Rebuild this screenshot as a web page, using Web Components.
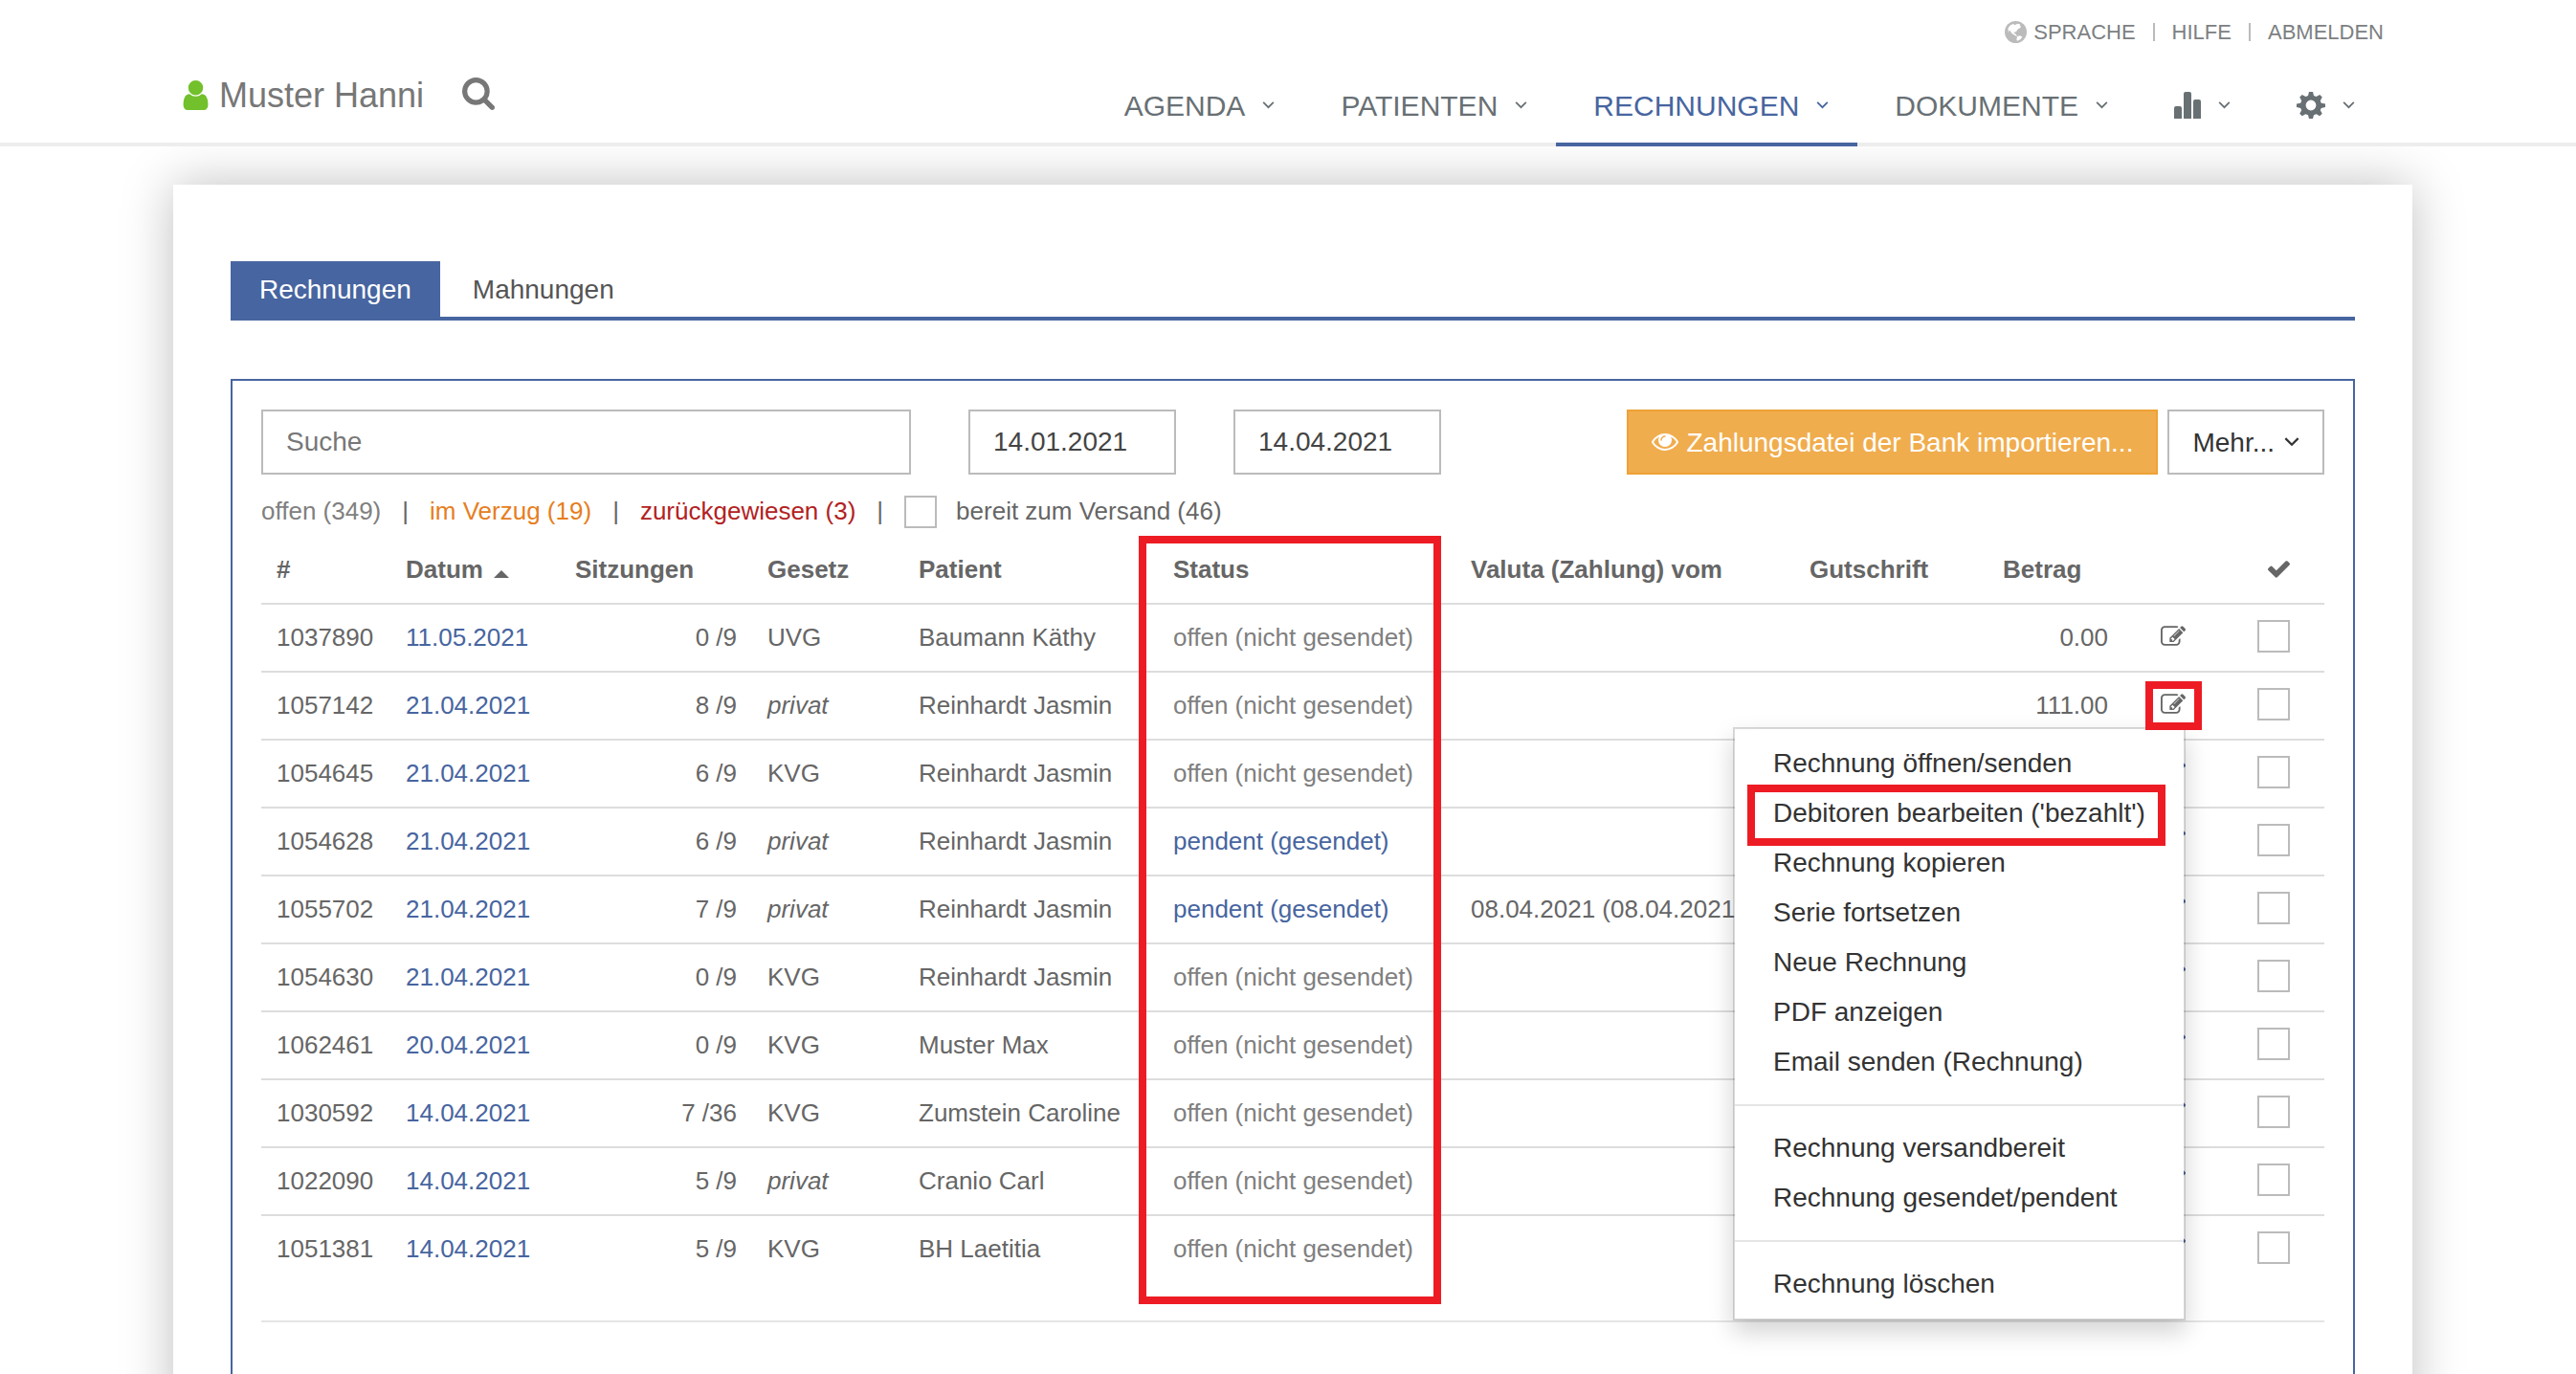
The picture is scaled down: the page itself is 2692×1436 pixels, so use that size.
<!DOCTYPE html>
<html lang="de">
<head>
<meta charset="utf-8">
<title>Rechnungen</title>
<style>
    html{
        --blue: #4765a0;
        --mark: #ed1c24;
        --line: #ddd;
        --field: #bbb;
        overflow-x: hidden;
    }
    body{
        margin: 0;
        min-height: 100vh;
        display: flex;
        flex-direction: column;
        overflow: clip;
        background: #fff;
        color: #666;
        font-family: "Liberation Sans", Arial, sans-serif;
        font-size: 26px;
        line-height: 37px;
    }
    invoice-card{
        flex: 1;
    }
</style>
</head>
<body>
    <site-header user="Muster Hanni"></site-header>
    <invoice-card>
        <tab-bar></tab-bar>
        <invoice-panel>
            <invoice-toolbar></invoice-toolbar>
            <invoice-filter></invoice-filter>
            <invoice-table></invoice-table>
        </invoice-panel>
    </invoice-card>

<script>
const icons = {
    user: ['256 128 1280 1536', '<path d="M1536 1399q0 109-62.5 187t-150.5 78h-854q-88 0-150.5-78t-62.5-187q0-85 8.5-160.5t31.5-152 58.5-131 94-89 134.5-34.5q131 128 313 128t313-128q76 0 134.5 34.5t94 89 58.5 131 31.5 152 8.5 160.5zm-256-887q0 159-112.5 271.5t-271.5 112.5-271.5-112.5-112.5-271.5 112.5-271.5 271.5-112.5 271.5 112.5 112.5 271.5z"/>'],
    search: ['64 128 1664 1664', '<path d="M1216 832q0-185-131.5-316.5t-316.5-131.5-316.5 131.5-131.5 316.5 131.5 316.5 316.5 131.5 316.5-131.5 131.5-316.5zm512 832q0 52-38 90t-90 38q-54 0-90-38l-343-342q-179 124-399 124-143 0-273.5-55.5t-225-150-150-225-55.5-273.5 55.5-273.5 150-225 225-150 273.5-55.5 273.5 55.5 225 150 150 225 55.5 273.5q0 220-124 399l343 343q37 37 37 90z"/>'],
    edit: ['0 128 1784 1408', '<path d="M888 1184l116-116-152-152-116 116v56h96v96h56zm440-720q-16-16-33 1l-350 350q-17 17-1 33t33-1l350-350q17-17 1-33zm80 594v190q0 119-84.5 203.5t-203.5 84.5h-832q-119 0-203.5-84.5t-84.5-203.5v-832q0-119 84.5-203.5t203.5-84.5h832q63 0 117 25 15 7 18 23 3 17-9 29l-49 49q-14 14-32 8-23-6-45-6h-832q-66 0-113 47t-47 113v832q0 66 47 113t113 47h832q66 0 113-47t47-113v-126q0-13 9-22l64-64q15-15 35-7t20 29zm-96-738l288 288-672 672h-288v-288zm444 132l-92 92-288-288 92-92q28-28 68-28t68 28l152 152q28 28 28 68t-28 68z"/>'],
    check: ['121 338 1550 1184', '<path d="M1671 566q0 40-28 68l-724 724-136 136q-28 28-68 28t-68-28l-136-136-362-362q-28-28-28-68t28-68l136-136q28-28 68-28t68 28l294 295 656-657q28-28 68-28t68 28l136 136q28 28 28 68z"/>'],
    eye: ['0 384 1792 1152', '<path d="M1664 960q-152-236-381-353 61 104 61 225 0 185-131.5 316.5t-316.5 131.5-316.5-131.5-131.5-316.5q0-121 61-225-229 117-381 353 133 205 333.5 326.5t434.5 121.5 434.5-121.5 333.5-326.5zm-720-384q0-20-14-34t-34-14q-125 0-214.5 89.5t-89.5 214.5q0 20 14 34t34 14 34-14 14-34q0-86 61-147t147-61q20 0 34-14t14-34zm848 384q0 34-20 69-140 230-376.5 368.5t-499.5 138.5-499.5-139-376.5-368q-20-35-20-69t20-69q140-229 376.5-368t499.5-139 499.5 139 376.5 368q20 35 20 69z"/>'],
    globe: ['0 0 23 23', '<circle cx="11.500" cy="11.500" r="11.500"/><path fill="#fff" d="M3.500 7.500L6 4.200 9 3l1.500 1.200 2.800-1.400 3 .8-.6 1.600 1.500.3-1 1.800-2.200 1-1.600 2.200-1.400 1.200-1.500-.4.3 1.300 1.500.8 1.500 2-.4.600-3-1.800-2.300-1.600-1.700-2.800-.8.200-.8 2.200zM13 16l3-.8 2.400 1.200-1.800 2.600-3.400 1.800-.8-1z"/>'],
    stats: ['0 0 28 28', '<path d="M0 28V17q0-2 2-2h4q2 0 2 2v11zM10 28V2q0-2 2-2h4q2 0 2 2v26zM20 28V10q0-2 2-2h4q2 0 2 2v18z"/>'],
    gear: ['0 0 30 28', '<path fill-rule="evenodd" d="M13 0h4l1 4 2.500 1 3.700-2 2.600 2.600-2 3.700 1 2.500L30 12.500v3.500l-4.200 1-1 2.300 2 3.400-2.600 2.600-3.600-2-2.600 1-1 3.700h-4l-1-3.700-2.600-1-3.600 2-2.600-2.600 2-3.400-1-2.300L0 16v-3.500l4.200-.7 1-2.500-2-3.700L5.800 3l3.700 2L12 4zM15 8.600a5.400 5.400 0 1 0 0 10.800a5.400 5.400 0 1 0 0-10.800z"/>'],
    chevron: ['0 0 14 9', '<path fill="none" stroke="currentColor" stroke-width="2" d="M1 1l6 6 6-6"/>'],
    caret: ['0 0 16 8', '<path d="M0 8l8-8 8 8z"/>']
};

class FaIcon extends HTMLElement{
    constructor(){
        super();
        this.shadow = this.attachShadow({mode: 'open'});
    }

    connectedCallback(){
        const [box, shape] = icons[this.getAttribute('name')];
        this.shadow.innerHTML =
        `
        <style>
            :host{
                display: inline-block;
                flex: none;
                line-height: 0;
            }
            svg{
                display: block;
                fill: currentColor;
            }
        </style>
        <svg aria-hidden="true" viewBox="${box}" width="${this.getAttribute('w')}" height="${this.getAttribute('h')}">${shape}</svg>`;
    }
}
customElements.define('fa-icon', FaIcon);

class NavItem extends HTMLElement{
    constructor(){
        super();
        this.shadow = this.attachShadow({mode: 'open'});
    }

    connectedCallback(){
        this.shadow.innerHTML =
        `
        <style>
            :host{
                display: block;
                color: #687074;
            }
            :host([active]){
                color: var(--blue);
            }
            a{
                display: flex;
                align-items: center;
                gap: 18px;
                height: 78px;
                padding: 2px 30px 0 39px;
                border-bottom: 4px solid transparent;
                color: inherit;
                font-size: 30px;
                text-decoration: none;
            }
            :host([active]) a{
                border-color: var(--blue);
            }
        </style>
        <a href="#"><slot></slot><fa-icon name="chevron" w="13" h="8"></fa-icon></a>`;
    }
}
customElements.define('nav-item', NavItem);

class SiteHeader extends HTMLElement{
    constructor(){
        super();
        this.shadow = this.attachShadow({mode: 'open'});
    }

    connectedCallback(){
        this.shadow.innerHTML =
        `
        <style>
            :host{
                display: block;
                position: relative;
                z-index: 1;
                background: #fff;
                border-bottom: 4px solid #ededed;
            }
            header{
                display: flex;
                justify-content: space-between;
                align-items: flex-end;
                height: 149px;
                padding: 0 201px 0 190px;
            }
            .user{
                display: flex;
                align-items: center;
                height: 100px;
                color: #777;
                font-size: 36px;
            }
            .user a{
                display: flex;
                align-items: center;
                gap: 10px;
                color: inherit;
                text-decoration: none;
            }
            .user a fa-icon{
                color: #72c02c;
            }
            button{
                margin-left: 40px;
                padding: 0;
                border: 0;
                background: none;
                color: inherit;
            }
            .right{
                display: flex;
                flex-direction: column;
                align-items: flex-end;
                justify-content: space-between;
                height: 100%;
            }
            .links{
                display: flex;
                align-items: center;
                gap: 18px;
                height: 66px;
                font-size: 22px;
            }
            .links a{
                display: flex;
                align-items: center;
                gap: 7px;
                color: #7c8082;
                text-decoration: none;
            }
            .links fa-icon{
                color: #bbb;
            }
            .links i{
                width: 2px;
                height: 19px;
                background: #bbb;
            }
            nav{
                display: flex;
                margin-bottom: -4px;
            }
        </style>
        <header>
            <div class="user">
                <a href="#"><fa-icon name="user" w="29" h="31"></fa-icon>${this.getAttribute('user')}</a>
                <button type="button" aria-label="Suchen"><fa-icon name="search" w="34" h="34"></fa-icon></button>
            </div>
            <div class="right">
                <div class="links">
                    <a href="#"><fa-icon name="globe" w="23" h="23"></fa-icon>SPRACHE</a><i></i>
                    <a href="#">HILFE</a><i></i>
                    <a href="#">ABMELDEN</a>
                </div>
                <nav>
                    <nav-item>AGENDA</nav-item>
                    <nav-item>PATIENTEN</nav-item>
                    <nav-item active>RECHNUNGEN</nav-item>
                    <nav-item>DOKUMENTE</nav-item>
                    <nav-item><fa-icon name="stats" w="28" h="28"></fa-icon></nav-item>
                    <nav-item><fa-icon name="gear" w="30" h="28"></fa-icon></nav-item>
                </nav>
            </div>
        </header>`;
    }
}
customElements.define('site-header', SiteHeader);

class InvoiceCard extends HTMLElement{
    constructor(){
        super();
        this.shadow = this.attachShadow({mode: 'open'});
        // the card runs out below the page, so its lower shadow never shows
        this.shadow.innerHTML =
        `
        <style>
            :host{
                display: flex;
                flex-direction: column;
                margin: 40px 171px -60px 181px;
                padding: 80px 60px 0;
                background: #fff;
                box-shadow: 0 0 50px rgba(0, 0, 0, .25);
            }
            ::slotted(invoice-panel){
                flex: 1;
            }
        </style>
        <slot></slot>`;
    }
}
customElements.define('invoice-card', InvoiceCard);

class TabBar extends HTMLElement{
    constructor(){
        super();
        this.shadow = this.attachShadow({mode: 'open'});
    }

    connectedCallback(){
        this.shadow.innerHTML =
        `
        <style>
            :host{
                display: flex;
                gap: 4px;
                border-bottom: 4px solid var(--blue);
                font-size: 28px;
                line-height: 56px;
            }
            a{
                padding: 2px 30px 0;
                color: #555;
                text-decoration: none;
            }
            a.active{
                background: var(--blue);
                color: #fff;
            }
        </style>
        <a class="active" href="#">Rechnungen</a>
        <a href="#">Mahnungen</a>`;
    }
}
customElements.define('tab-bar', TabBar);

class InvoicePanel extends HTMLElement{
    constructor(){
        super();
        this.shadow = this.attachShadow({mode: 'open'});
        this.shadow.innerHTML =
        `
        <style>
            :host{
                display: block;
                margin-top: 61px;
                padding: 30px 30px 0;
                border: 2px solid var(--blue);
                border-bottom: 0;
            }
        </style>
        <slot></slot>`;
    }
}
customElements.define('invoice-panel', InvoicePanel);

class InvoiceToolbar extends HTMLElement{
    constructor(){
        super();
        this.shadow = this.attachShadow({mode: 'open'});
    }

    connectedCallback(){
        this.shadow.innerHTML =
        `
        <style>
            :host{
                display: grid;
                grid-template-columns: 679fr 217fr 217fr 863fr;
                gap: 60px;
            }
            input, button{
                box-sizing: border-box;
                height: 68px;
                margin: 0;
                padding: 0 24px;
                border: 2px solid var(--field);
                border-radius: 0;
                background: #fff;
                color: #444;
                font: inherit;
                font-size: 28px;
            }
            input{
                width: 100%;
                min-width: 0;
            }
            input::placeholder{
                color: #777;
                opacity: 1;
            }
            div{
                display: flex;
                justify-content: flex-end;
                gap: 10px;
            }
            button{
                display: flex;
                align-items: center;
                gap: 8px;
                color: #333;
                white-space: nowrap;
            }
            .import{
                border-color: #eea236;
                background: #f0ad4e;
                color: #fff;
            }
            .more{
                gap: 10px;
            }
        </style>
        <input type="text" placeholder="Suche" aria-label="Suche">
        <input type="text" value="14.01.2021" aria-label="Von">
        <input type="text" value="14.04.2021" aria-label="Bis">
        <div>
            <button type="button" class="import"><fa-icon name="eye" w="28" h="18"></fa-icon>Zahlungsdatei der Bank importieren...</button>
            <button type="button" class="more">Mehr...<fa-icon name="chevron" w="16" h="10"></fa-icon></button>
        </div>`;
    }
}
customElements.define('invoice-toolbar', InvoiceToolbar);

const checkboxStyle = `
            input[type=checkbox]{
                appearance: none;
                display: block;
                box-sizing: border-box;
                width: 34px;
                height: 34px;
                margin: 0;
                border: 2px solid var(--field);
                background: #fff;
            }`;

class InvoiceFilter extends HTMLElement{
    constructor(){
        super();
        this.shadow = this.attachShadow({mode: 'open'});
    }

    connectedCallback(){
        this.shadow.innerHTML =
        `
        <style>
            :host{
                display: flex;
                align-items: center;
                gap: 22px;
                margin: 20px 0 8px;
                white-space: nowrap;
            }
            a{
                color: #808080;
                text-decoration: none;
            }
            a.late{
                color: #e67e22;
            }
            a.rejected{
                color: #b22222;
            }
            label{
                display: flex;
                align-items: center;
                gap: 20px;
            }
            ${checkboxStyle}
        </style>
        <a href="#">offen (349)</a><span>|</span>
        <a class="late" href="#">im Verzug (19)</a><span>|</span>
        <a class="rejected" href="#">zurückgewiesen (3)</a><span>|</span>
        <label><input type="checkbox">bereit zum Versand (46)</label>`;
    }
}
customElements.define('invoice-filter', InvoiceFilter);

class ActionMenu extends HTMLElement{
    constructor(){
        super();
        this.shadow = this.attachShadow({mode: 'open'});
    }

    connectedCallback(){
        this.shadow.innerHTML =
        `
        <style>
            :host{
                display: block;
                box-sizing: border-box;
                width: 473px;
                padding: 10px 0;
                border: 2px solid rgba(0, 0, 0, .15);
                background: #fff;
                background-clip: padding-box;
                box-shadow: 0 12px 24px rgba(0, 0, 0, .175);
                text-align: left;
            }
            a{
                display: block;
                position: relative;
                padding: 6px 40px;
                color: #333;
                font-size: 28px;
                line-height: 40px;
                text-decoration: none;
                white-space: nowrap;
            }
            hr{
                height: 2px;
                margin: 18px 0;
                border: 0;
                background: #e5e5e5;
            }
            .marked::after{
                content: "";
                position: absolute;
                box-sizing: border-box;
                top: -4px;
                left: 13px;
                width: 437px;
                height: 64px;
                border: 8px solid var(--mark);
            }
        </style>
        <a href="#">Rechnung öffnen/senden</a>
        <a class="marked" href="#">Debitoren bearbeiten ('bezahlt')</a>
        <a href="#">Rechnung kopieren</a>
        <a href="#">Serie fortsetzen</a>
        <a href="#">Neue Rechnung</a>
        <a href="#">PDF anzeigen</a>
        <a href="#">Email senden (Rechnung)</a>
        <hr>
        <a href="#">Rechnung versandbereit</a>
        <a href="#">Rechnung gesendet/pendent</a>
        <hr>
        <a href="#">Rechnung löschen</a>`;
    }
}
customElements.define('action-menu', ActionMenu);

// Nr, Datum, Sitzungen, Gesetz, Patient, pendent, Valuta, Betrag
const invoices = [
    ['1037890', '11.05.2021', '0 /9', 'UVG', 'Baumann Käthy', false, '', '0.00'],
    ['1057142', '21.04.2021', '8 /9', 'privat', 'Reinhardt Jasmin', false, '', '111.00'],
    ['1054645', '21.04.2021', '6 /9', 'KVG', 'Reinhardt Jasmin', false, '', ''],
    ['1054628', '21.04.2021', '6 /9', 'privat', 'Reinhardt Jasmin', true, '', ''],
    ['1055702', '21.04.2021', '7 /9', 'privat', 'Reinhardt Jasmin', true, '08.04.2021 (08.04.2021', ''],
    ['1054630', '21.04.2021', '0 /9', 'KVG', 'Reinhardt Jasmin', false, '', ''],
    ['1062461', '20.04.2021', '0 /9', 'KVG', 'Muster Max', false, '', ''],
    ['1030592', '14.04.2021', '7 /36', 'KVG', 'Zumstein Caroline', false, '', ''],
    ['1022090', '14.04.2021', '5 /9', 'privat', 'Cranio Carl', false, '', ''],
    ['1051381', '14.04.2021', '5 /9', 'KVG', 'BH Laetitia', false, '', '']
];
const openRow = 1;
const columns = [135, 177, 201, 158, 266, 311, 354, 202, 142, 104, 106];

class InvoiceTable extends HTMLElement{
    constructor(){
        super();
        this.shadow = this.attachShadow({mode: 'open'});
    }

    connectedCallback(){
        this.render();
    }

    row([nr, date, sessions, law, patient, pending, paid, amount], index){
        const open = index == openRow;
        return `
            <tr>
                <td>${nr}</td>
                <td><a href="#">${date}</a></td>
                <td class="num">${sessions}</td>
                <td>${law == 'privat' ? '<em>privat</em>' : law}</td>
                <td>${patient}</td>
                <td>${pending ? '<a href="#">pendent (gesendet)</a>' : '<span class="open">offen (nicht gesendet)</span>'}</td>
                <td>${paid}</td>
                <td></td>
                <td class="num">${amount}</td>
                <td class="edit${open ? ' marked' : ''}">
                    <button type="button" class="${index > openRow ? 'link' : ''}" aria-label="Bearbeiten"><fa-icon name="edit" w="26" h="21"></fa-icon></button>
                    ${open ? '<action-menu></action-menu>' : ''}
                </td>
                <td class="select"><input type="checkbox" aria-label="${nr}"></td>
            </tr>`;
    }

    render(){
        this.shadow.innerHTML =
        `
        <style>
            :host{
                display: block;
                padding-bottom: 40px;
                border-bottom: 2px solid #e5e5e5;
            }
            table{
                width: 100%;
                table-layout: fixed;
                border-spacing: 0;
            }
            th, td{
                height: 37px;
                padding: 16px;
                border-bottom: 2px solid var(--line);
                text-align: left;
                vertical-align: top;
                white-space: nowrap;
            }
            tr:last-child td{
                border-bottom: 0;
            }
            a{
                color: var(--blue);
                text-decoration: none;
            }
            .open{
                color: #808080;
            }
            .num{
                text-align: right;
            }
            .edit{
                position: relative;
            }
            button{
                display: block;
                margin: 0 auto;
                padding: 6px 0;
                border: 0;
                background: none;
                color: inherit;
            }
            button.link{
                color: var(--blue);
            }
            th.select, td.select{
                padding-right: 36px;
                text-align: right;
            }
            td.select input{
                margin-left: auto;
            }
            thead tr th{
                border-bottom: 2px solid var(--line);
            }
            .sort fa-icon{
                margin-left: 4px;
            }
            .status{
                position: relative;
            }
            .status::after, .marked::after{
                content: "";
                position: absolute;
                box-sizing: border-box;
                border: 8px solid var(--mark);
                pointer-events: none;
            }
            .status::after{
                top: -1px;
                left: -20px;
                width: 316px;
                height: 803px;
            }
            .marked::after{
                top: 9px;
                left: 23px;
                width: 59px;
                height: 51px;
                z-index: 3;
            }
            action-menu{
                position: absolute;
                top: 57px;
                right: 39px;
                z-index: 2;
            }
            ${checkboxStyle}
        </style>
        <table>
            <colgroup>${columns.map(width => `<col style="width: ${width}px">`).join('')}</colgroup>
            <thead>
                <tr>
                    <th>#</th>
                    <th class="sort">Datum <fa-icon name="caret" w="16" h="8"></fa-icon></th>
                    <th>Sitzungen</th>
                    <th>Gesetz</th>
                    <th>Patient</th>
                    <th class="status">Status</th>
                    <th>Valuta (Zahlung) vom</th>
                    <th>Gutschrift</th>
                    <th>Betrag</th>
                    <th></th>
                    <th class="select"><fa-icon name="check" w="23" h="18"></fa-icon></th>
                </tr>
            </thead>
            <tbody>${invoices.map((invoice, index) => this.row(invoice, index)).join('')}</tbody>
        </table>`;
    }
}
customElements.define('invoice-table', InvoiceTable);
</script>
</body>
</html>
